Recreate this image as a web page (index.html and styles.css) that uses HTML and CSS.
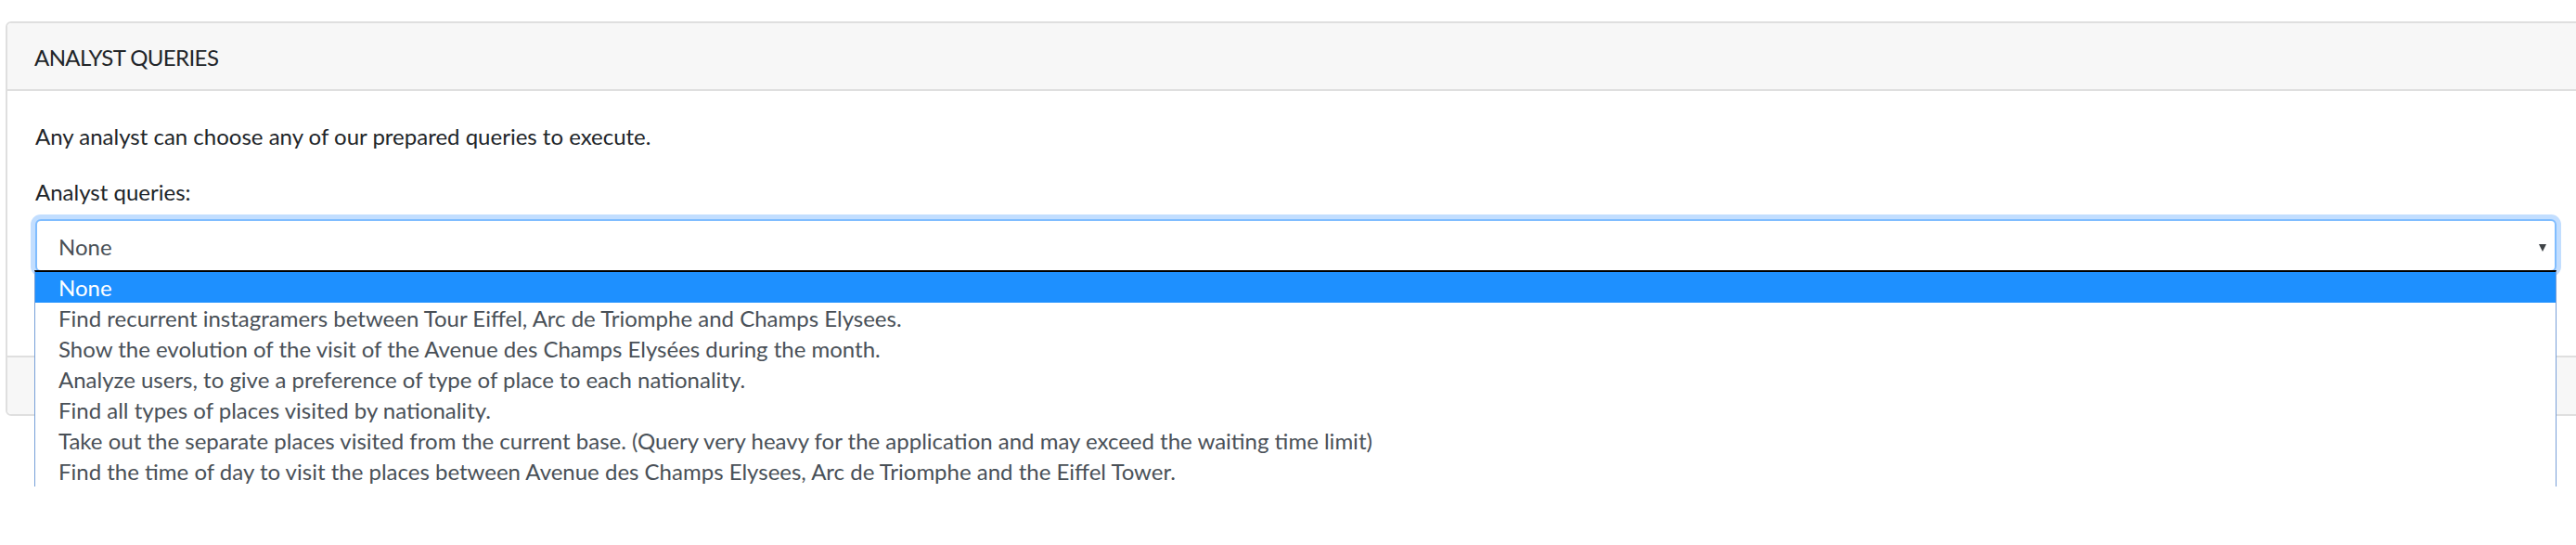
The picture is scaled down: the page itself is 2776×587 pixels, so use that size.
FILE: index.html
```html
<!DOCTYPE html>
<html lang="en">
<head>
<meta charset="utf-8">
<title>Analyst queries</title>
<link rel="stylesheet" href="styles.css">
</head>
<body>
<div class="page">
  <div class="card">
    <div class="card-header"><span class="title">ANALYST QUERIES</span></div>
    <div class="card-body">
      <p class="intro">Any analyst can choose any of our prepared queries to execute.</p>
      <div class="form-group">
        <label class="label">Analyst queries:</label>
        <div class="select-wrap">
          <div class="select">
            <span class="select-value">None</span>
            <span class="caret"></span>
          </div>
          <ul class="dropdown">
            <li class="option selected">None</li>
            <li class="option">Find recurrent instagramers between Tour Eiffel, Arc de Triomphe and Champs Elysees.</li>
            <li class="option">Show the evolution of the visit of the Avenue des Champs Elysées during the month.</li>
            <li class="option">Analyze users, to give a preference of type of place to each nationality.</li>
            <li class="option">Find all types of places visited by nationality.</li>
            <li class="option">Take out the separate places visited from the current base. (Query very heavy for the application and may exceed the waiting time limit)</li>
            <li class="option">Find the time of day to visit the places between Avenue des Champs Elysees, Arc de Triomphe and the Eiffel Tower.</li>
          </ul>
        </div>
      </div>
      <div class="results"></div>
    </div>
    <div class="card-footer"></div>
  </div>
</div>
</body>
</html>
```

FILE: styles.css
```css
body {
  margin: 0;
  padding: 0;
  min-height: 587px;
  background: #ffffff;
  font-family: Lato, "Open Sans", sans-serif;
  font-size: 24px;
  line-height: 36px;
  color: #212529;
}

.page {
  padding: 23px 0 0 6px;
  width: 2770px;
  min-height: 564px;
  overflow-x: clip;
  overflow-y: visible;
}

.card {
  width: 2781px;
  box-sizing: border-box;
  border: 2px solid #dfdfdf;
  border-radius: 6px;
  background: #ffffff;
}

.card-header {
  background: #f7f7f7;
  border-bottom: 2px solid #dfdfdf;
  border-radius: 5px 5px 0 0;
  padding: 19px 29px 16px;
  height: 36px;
}

.title {
  letter-spacing: -0.6px;
}

.card-body {
  padding: 31px 30px 30px;
}

.intro {
  margin: 0 0 24px;
}

.label {
  display: block;
  margin-bottom: 11px;
}

.form-group {
  margin-bottom: 24px;
}

.select-wrap {
  position: relative;
}

.select {
  box-sizing: border-box;
  height: 57px;
  border: 2px solid #80bdff;
  border-radius: 6px;
  box-shadow: 0 0 0 5px #c2deff;
  background: #ffffff;
  display: flex;
  align-items: flex-start;
  justify-content: space-between;
  padding: 10px 9px 0 23px;
  color: #495057;
}

.caret {
  width: 0;
  height: 0;
  margin-top: 15px;
  border-left: 4.5px solid transparent;
  border-right: 4.5px solid transparent;
  border-top: 8px solid #3f4347;
}

.dropdown {
  position: absolute;
  top: 55px;
  left: -1px;
  right: 0;
  margin: 0;
  padding: 0;
  list-style: none;
  background: #ffffff;
  border-top: 2px solid #000000;
  border-left: 1px solid #78a0d8;
  border-right: 1px solid #78a0d8;
  z-index: 10;
}

.option {
  height: 33px;
  line-height: 33px;
  padding-left: 25px;
  color: #495057;
  white-space: nowrap;
}

.option.selected {
  background: #1e90ff;
  color: #ffffff;
}

.results {
  height: 36px;
}

.card-footer {
  background: #f7f7f7;
  border-top: 2px solid #dfdfdf;
  border-radius: 0 0 5px 5px;
  height: 61px;
}
```
